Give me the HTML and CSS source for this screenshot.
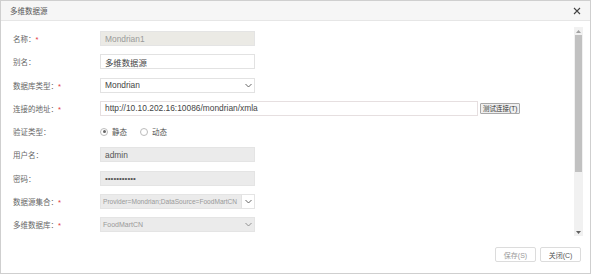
FILE: index.html
```html
<!DOCTYPE html>
<html>
<head>
<meta charset="utf-8">
<link rel="stylesheet" href="styles.css">
</head>
<body>
<div class="dialog">
  <div class="header">
    <span class="title">多维数据源</span>
    <svg class="close" width="8" height="8" viewBox="0 0 8 8"><path d="M1 1L7 7M7 1L1 7" stroke="#444" stroke-width="1.1"/></svg>
  </div>
  <div class="body">
    <div class="form">
      <div class="label">名称：<span class="req">*</span></div>
      <div class="field"><div class="input ro warm">Mondrian1</div></div>

      <div class="label">别名：</div>
      <div class="field"><div class="input">多维数据源</div></div>

      <div class="label">数据库类型：<span class="req">*</span></div>
      <div class="field"><div class="input select"><span>Mondrian</span><span class="chev"><svg width="7" height="5" viewBox="0 0 7 5"><path d="M0.5 1L3.5 4L6.5 1" fill="none" stroke="#555" stroke-width="0.9"/></svg></span></div></div>

      <div class="label">连接的地址：<span class="req">*</span></div>
      <div class="field url"><div class="input wide">http://10.10.202.16:10086/mondrian/xmla</div><button class="test">测试连接(T)</button></div>

      <div class="label">验证类型：</div>
      <div class="field radios">
        <span class="radio on"></span><span class="rlabel">静态</span>
        <span class="radio"></span><span class="rlabel">动态</span>
      </div>

      <div class="label">用户名：</div>
      <div class="field"><div class="input ro dark">admin</div></div>

      <div class="label">密码：</div>
      <div class="field"><div class="input ro dark pw">•••••••••••</div></div>

      <div class="label">数据源集合：<span class="req">*</span></div>
      <div class="field"><div class="input ro select tight"><span class="clip small">Provider=Mondrian;DataSource=FoodMartCN</span><span class="chev box"><svg width="7" height="5" viewBox="0 0 7 5"><path d="M0.5 1L3.5 4L6.5 1" fill="none" stroke="#555" stroke-width="0.9"/></svg></span></div></div>

      <div class="label">多维数据库：<span class="req">*</span></div>
      <div class="field"><div class="input ro select tight"><span class="clip mid">FoodMartCN</span><span class="chev"><svg width="7" height="5" viewBox="0 0 7 5"><path d="M0.5 1L3.5 4L6.5 1" fill="none" stroke="#888" stroke-width="0.9"/></svg></span></div></div>
    </div>
    <div class="scrollbar">
      <div class="arrow"><svg width="5" height="3" viewBox="0 0 5 3"><path d="M0 3L2.5 0L5 3Z" fill="#a0a0a0"/></svg></div>
      <div class="thumb"></div>
      <div class="track"></div>
      <div class="arrow"><svg width="5" height="3" viewBox="0 0 5 3"><path d="M0 0L2.5 3L5 0Z" fill="#606060"/></svg></div>
    </div>
  </div>
  <div class="footer">
    <button class="btn dim">保存(S)</button>
    <button class="btn">关闭(C)</button>
  </div>
</div>
</body>
</html>
```

FILE: styles.css
```css
html, body {
  margin: 0;
  padding: 0;
  background: #fff;
}
body {
  width: 591px;
  height: 274px;
  font-family: "Liberation Sans", "Noto Sans CJK SC", sans-serif;
  font-size: 8px;
  color: #555;
}
.dialog {
  box-sizing: border-box;
  width: 591px;
  height: 274px;
  border: 1px solid #cfcfcf;
  display: flex;
  flex-direction: column;
}
.header {
  height: 19px;
  flex: none;
  background: #f6f6f6;
  border-bottom: 1px solid #e6e6e6;
  display: flex;
  align-items: center;
  justify-content: space-between;
  padding: 0 9px 0 9px;
}
.title {
  color: #555;
  font-size: 7.5px;
}
.close {
  display: block;
}
.body {
  height: 215px;
  flex: none;
  display: flex;
  padding-right: 7px;
}
.form {
  flex: 1;
  display: grid;
  grid-template-columns: 87px 1fr;
  grid-auto-rows: 23.25px;
  align-items: center;
  padding: 6px 0 0 12px;
  overflow: hidden;
}
.label {
  color: #666;
  font-size: 7.5px;
  white-space: nowrap;
}
.req {
  color: #e2383b;
}
.field {
  display: flex;
  align-items: center;
}
.input {
  box-sizing: border-box;
  width: 155px;
  height: 15px;
  border: 1px solid #e2e2e2;
  background: #fff;
  padding: 0 4px;
  display: flex;
  align-items: center;
  color: #444;
  font-size: 8.4px;
  white-space: nowrap;
  overflow: hidden;
}
.input.ro {
  background: #ebebeb;
  border-color: #e4e4e4;
  color: #999;
}
.input.warm {
  background: #ebeae5;
  color: #9a9a9a;
}
.input.dark {
  color: #555;
}
.input.pw {
  font-size: 8px;
}
.input.wide {
  width: 378px;
  border-color: #e6dfe0;
}
.select {
  justify-content: space-between;
  padding-right: 0;
}
.select.tight {
  padding-left: 2px;
}
.clip {
  flex: 1;
  min-width: 0;
  white-space: nowrap;
}
.clip.small {
  font-size: 6.6px;
}
.clip.mid {
  font-size: 7px;
}
.chev {
  width: 12px;
  height: 13px;
  flex: none;
  display: flex;
  align-items: center;
  justify-content: center;
}
.chev.box {
  background: #fff;
  border-left: 1px solid #e2e2e2;
}
.test {
  margin-left: 2px;
  height: 11px;
  padding: 0 2px;
  font-family: "Liberation Sans", "Noto Sans CJK SC", sans-serif;
  font-size: 6.5px;
  line-height: 9px;
  color: #333;
  background: #efefef;
  border: 1px solid #a8a8a8;
  border-radius: 1px;
}
.radio {
  box-sizing: border-box;
  width: 8px;
  height: 8px;
  border: 1px solid #bbb;
  border-radius: 50%;
  background: #fff;
  position: relative;
}
.radio.on::after {
  content: "";
  position: absolute;
  left: 1.5px;
  top: 1.5px;
  width: 3px;
  height: 3px;
  border-radius: 50%;
  background: #666;
}
.rlabel {
  margin-left: 4px;
  margin-right: 13px;
  color: #555;
  font-size: 7.5px;
}
.scrollbar {
  width: 9px;
  margin-top: 6px;
  background: #f1f1f1;
  display: flex;
  flex-direction: column;
}
.arrow {
  height: 8px;
  display: flex;
  align-items: center;
  justify-content: center;
}
.thumb {
  height: 137px;
  margin: 0 1px;
  background: #c1c1c1;
}
.track {
  flex: 1;
}
.footer {
  flex: 1;
  display: flex;
  justify-content: flex-end;
  align-items: center;
  gap: 4px;
  padding: 0 9px 0 0;
}
.btn {
  height: 15px;
  width: 41px;
  padding: 0;
  font-family: "Liberation Sans", "Noto Sans CJK SC", sans-serif;
  font-size: 7px;
  color: #555;
  background: #fff;
  border: 1px solid #dcdcdc;
  border-radius: 2px;
}
.btn.dim {
  color: #999;
}
```
